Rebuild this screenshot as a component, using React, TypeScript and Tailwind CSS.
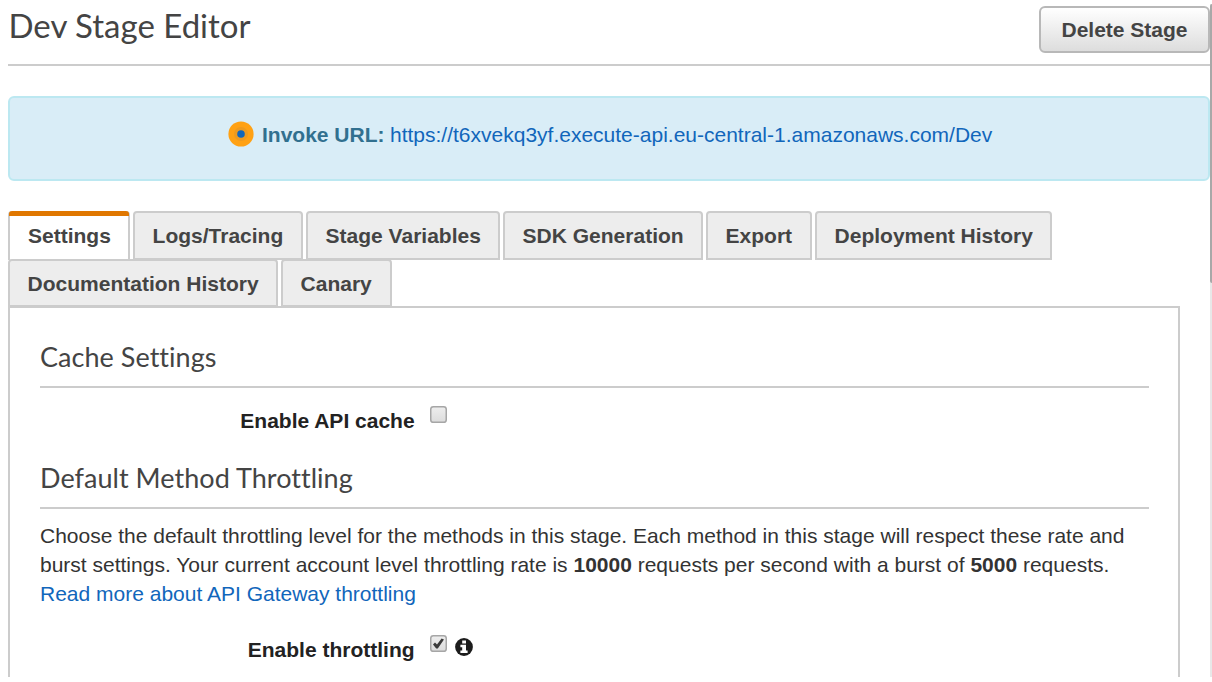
import { ReactNode } from "react";

function Tab({ label, active, width, last }: { label: string; active?: boolean; width: string; last?: boolean }) {
  if (active) {
    return (
      <button className={`${width} h-[49px] rounded-t-[4px] border-x-2 border-[#cccccc] bg-white text-left font-bold`}>
        <span className="-mx-[1px] block h-[5px] rounded-t-[3px] bg-[#e07700]" />
        <span className="block h-[44px] pl-[18px] leading-[40px]">{label}</span>
      </button>
    );
  }
  return (
    <button
      className={`${width} ${last ? "h-[48px]" : "h-[49px]"} rounded-t-[4px] border-2 border-[#cccccc] bg-[#ededed] pl-[17.6px] text-left font-bold leading-[46px] whitespace-nowrap`}
    >
      {label}
    </button>
  );
}

function SectionTitle({ children }: { children: ReactNode }) {
  return (
    <h2 className="h-[50px] border-b-2 border-[#cccccc] font-['Lato',sans-serif] text-[27px] leading-[38px] tracking-[0.04px] text-[#444444] [font-variant-ligatures:none]">
      {children}
    </h2>
  );
}

function Checkbox({ checked }: { checked?: boolean }) {
  return (
    <svg width="17" height="17" viewBox="0 0 17 17" role="checkbox" aria-checked={!!checked}>
      <defs>
        <linearGradient id="box" x1="0" y1="0" x2="0" y2="1">
          <stop offset="0" stopColor="#eeeeee" />
          <stop offset="1" stopColor="#dcdcdc" />
        </linearGradient>
      </defs>
      <rect x="0.75" y="0.75" width="15.5" height="15.5" rx="2.6" fill="url(#box)" stroke="#a6a6a6" strokeWidth="1.5" />
      {checked && <path d="M3 9.4 L5 7.5 L7 9.4 L11.6 3.4 L14 4.6 L7.8 13.4 L6.2 13.4 Z" fill="#3b3b3b" />}
    </svg>
  );
}

function InfoIcon() {
  return (
    <svg width="18" height="18" viewBox="0 0 18 18">
      <circle cx="9" cy="9" r="8.9" fill="#1c1c1c" />
      <path d="M7.2 2.5h3.8v2.9H7.2zM5.4 6.8h5.6v5.6h1.6v2.5H5.4v-2.5h1.8V9.3H5.4z" fill="#fff" />
    </svg>
  );
}

export default function App() {
  return (
    <div className="flex h-[682px] w-[1212px] overflow-hidden bg-white font-['Liberation_Sans',Arial,sans-serif] text-[21px] text-[#444444]">
      <main className="h-[677px] w-[1210px] shrink-0 overflow-hidden pl-[8px]">
        <header className="flex h-[66px] justify-between border-b-2 border-[#cccccc]">
          <h1 className="pl-[0.5px] pt-[5px] font-['Lato',sans-serif] text-[33px] leading-[40px]">Dev Stage Editor</h1>
          <button className="mt-[6px] h-[47px] w-[171px] rounded-[6px] border-2 border-[#b8b8b8] bg-linear-to-b from-white to-[#dddddd] font-bold leading-[44px]">
            Delete Stage
          </button>
        </header>

        <section className="mt-[30px] flex h-[85px] items-start rounded-[6px] border-2 border-[#bce8f1] bg-[#d9edf7] pl-[217.5px] pt-[23px]">
          <svg width="26" height="26" viewBox="0 0 26 26" className="shrink-0">
            <circle cx="13" cy="13" r="12.6" fill="#ffa114" />
            <circle cx="13" cy="13" r="7" fill="#ed9a20" />
            <circle cx="13" cy="13" r="3.8" fill="#1166bb" />
          </svg>
          <p className="ml-[8.5px] flex whitespace-nowrap leading-[27px]">
            <strong className="w-[128px] text-[#31708f]">Invoke URL:</strong>
            <a className="text-[#1166bb]">https://t6xvekq3yf.execute-api.eu-central-1.amazonaws.com/Dev</a>
          </p>
        </section>

        <nav className="mt-[30px]">
          <div className="flex h-[49px]">
            <Tab label="Settings" active width="w-[122px]" />
            <span className="w-[3px]" />
            <Tab label="Logs/Tracing" width="w-[170px]" />
            <span className="w-[3px]" />
            <Tab label="Stage Variables" width="w-[194px]" />
            <span className="w-[3px]" />
            <Tab label="SDK Generation" width="w-[200px]" />
            <span className="w-[3px]" />
            <Tab label="Export" width="w-[106px]" />
            <span className="w-[3px]" />
            <Tab label="Deployment History" width="w-[237px]" />
          </div>
          <div className="-mt-px flex h-[47px]">
            <Tab label="Documentation History" width="w-[270px]" last />
            <span className="w-[3px]" />
            <Tab label="Canary" width="w-[111px]" last />
          </div>
        </nav>

        <section className="h-[400px] w-[1172px] border-2 border-[#cccccc] pl-[30px] pr-[29px] pt-[30px]">
          <SectionTitle>Cache Settings</SectionTitle>
          <div className="flex h-[71px] pt-[18px]">
            <label className="w-[374.6px] text-right font-bold leading-[30px] text-[#222222]">Enable API cache</label>
            <span className="ml-[15.4px]"><Checkbox /></span>
          </div>
          <SectionTitle>Default Method Throttling</SectionTitle>
          <p className="mt-[12px] whitespace-nowrap leading-[29px] text-[#333333]">
            Choose the default throttling level for the methods in this stage. Each method in this stage will respect these rate and
            <br />
            burst settings. Your current account level throttling rate is <strong>10000</strong> requests per second with a burst of <strong>5000</strong> requests.
            <br />
            <a className="text-[#1166bb]">Read more about API Gateway throttling</a>
          </p>
          <div className="flex pt-[27px]">
            <label className="w-[374.6px] text-right font-bold leading-[30px] text-[#222222]">Enable throttling</label>
            <span className="ml-[15.4px]"><Checkbox checked /></span>
            <span className="ml-[8px] mt-[3px]"><InfoIcon /></span>
          </div>
        </section>
      </main>
      <aside className="h-[677px] w-[2px] bg-[#e8e8e8]">
        <div className="h-[4px] bg-white" />
        <div className="h-[279px] rounded-l-[2px] bg-[#a8a8a8]" />
      </aside>
    </div>
  );
}
